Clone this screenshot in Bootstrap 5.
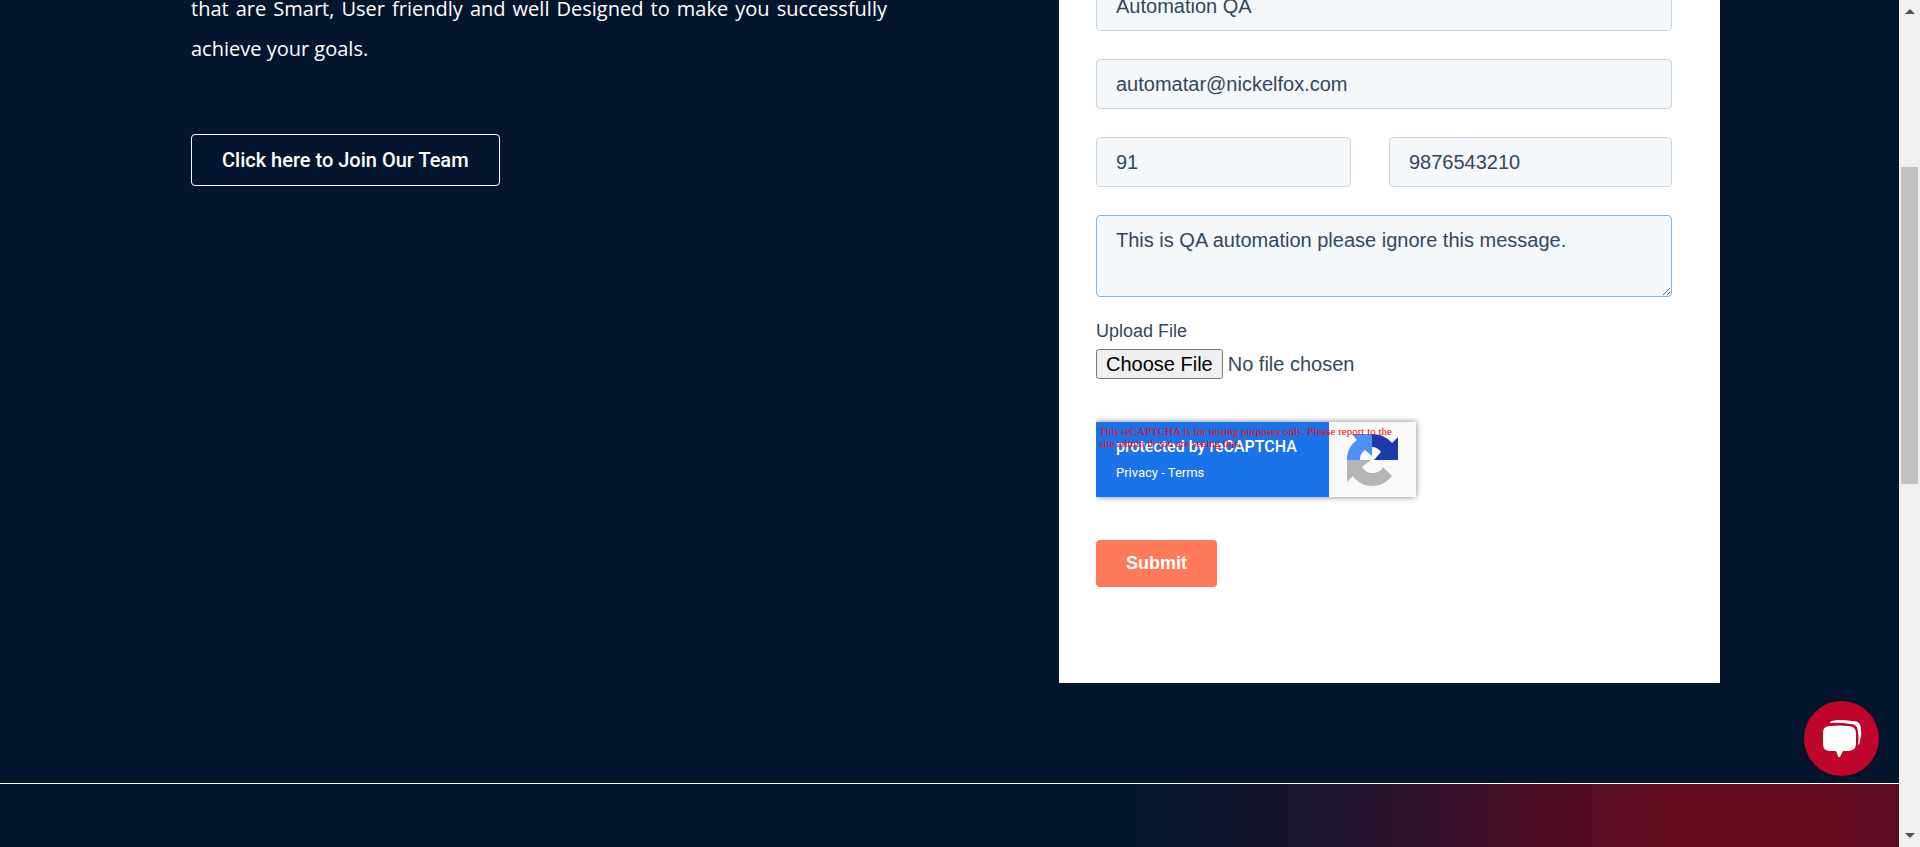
<!DOCTYPE html>
<html lang="en">
<head>
<meta charset="utf-8">
<meta name="viewport" content="width=device-width, initial-scale=1">
<title>Contact us</title>
<link href="https://cdn.jsdelivr.net/npm/bootstrap@5.3.0/dist/css/bootstrap.min.css" rel="stylesheet">
<style>
  body { background: #04162e; font-family: "Liberation Sans", Arial, sans-serif; }
  .page-area { min-width: 0; }
  .contact-grid { grid-template-columns: 191fr 696fr 172fr 661fr 179fr; padding-bottom: 100px; }
  .intro-col { grid-column: 2; margin-top: -11px; }
  .form-col { grid-column: 4; margin-top: -19px; padding: 0 48px 96px 37px; }
  .intro-text { font: 20px/40px "Open Sans", sans-serif; text-align: justify; margin-bottom: 65px; }
  .join-btn { font: 500 20px/24px Roboto, sans-serif; padding: 13px 30px; border-radius: 4px; }
  .hs-field { background: #f5f8fa; border: 1px solid #cbd6e2; border-radius: 4px; color: #33475b;
    font-size: 20px; line-height: 24px; padding: 12px 19px; height: 50px; }
  .hs-field:focus, .hs-area { background: #f5f8fa; border-color: #75b9ee; color: #33475b; box-shadow: none; }
  .hs-area { height: 82px; resize: vertical; display: block; }
  .form-stack { gap: 28px; }
  .phone-grid { grid-template-columns: 255fr 283fr; gap: 38px; }
  .upload-label { font-size: 18px; line-height: 24px; margin: -6px 0 6px; color: #33475b; }
  .upload-input { font-size: 20px; line-height: 24px; color: #33475b; height: 30px; }
  .upload-input::file-selector-button { padding: 1px 8px; margin-right: 5px; }
  .captcha-clip { overflow: hidden; margin: 5px 0 0; padding: 10px 10px 10px 0; width: 330px; }
  .captcha { height: 75px; background: #f9f9f9; box-shadow: 0 0 6px gray; font-family: Roboto, sans-serif; }
  .captcha-info { width: 233px; background: #1a73e8; padding: 15px 0 0 20px; font-size: 13px; line-height: 20px; }
  .captcha-title { font-size: 16px; font-weight: 500; line-height: 20px; margin-bottom: 6px; white-space: nowrap; }
  .captcha-warning { top: 3px; left: 3px; right: 8px; color: red; font: 11px/12px "Liberation Serif", serif; }
  .submit-btn { background: #ff7a59; color: #fff; font-size: 18px; font-weight: 700; line-height: 23px; padding: 12px 30px; border-radius: 4px; margin-top: 5px; }
  .next-band { min-height: 64px; border-top: 1px solid #fff;
    background: linear-gradient(90deg, #04162e 60%, #0d162e 64%, #19142a 69%, #33122a 76%, #4c0e25 81%, #610b21 87%, #660c22 92%, #660c22 96%, #5a0b21 100%); }
  .scroll-track { width: 21px; background: #f0f0f0; }
  .scroll-thumb { width: 17px; height: 317px; background: #c1c1c1; margin-top: 149px; }
  .chat-btn { right: 41px; bottom: 71px; width: 75px; height: 75px; background: #bf0529; box-shadow: 0 2px 12px rgba(0,0,0,.3); }
</style>
</head>
<body>
<div class="d-flex vh-100 overflow-hidden">
  <div class="page-area flex-grow-1 d-flex flex-column overflow-hidden">
    <main class="contact-grid d-grid">
      <section class="intro-col text-white">
        <p class="intro-text">that are Smart, User friendly and well Designed to make you successfully achieve your goals.</p>
        <a href="#join" class="btn btn-outline-light join-btn text-white border-white">Click here to Join Our Team</a>
      </section>
      <form class="form-col bg-white">
        <div class="form-stack d-flex flex-column align-items-stretch">
          <input class="form-control hs-field" type="text" aria-label="Name" value="Automation QA">
          <input class="form-control hs-field" type="email" aria-label="Email" value="automatar@nickelfox.com">
          <div class="phone-grid d-grid">
            <input class="form-control hs-field" type="text" aria-label="Country code" value="91">
            <input class="form-control hs-field" type="tel" aria-label="Phone number" value="9876543210">
          </div>
          <textarea class="form-control hs-field hs-area" aria-label="Message">This is QA automation please ignore this message.</textarea>
          <div>
            <label class="upload-label d-block" for="upload">Upload File</label>
            <input class="upload-input d-block w-100" type="file" id="upload">
          </div>
          <div class="captcha-clip">
            <div class="captcha d-flex position-relative">
              <div class="captcha-info text-white">
                <div class="captcha-title">protected by reCAPTCHA</div>
                <a class="text-white text-decoration-none" href="#privacy">Privacy</a> - <a class="text-white text-decoration-none" href="#terms">Terms</a>
              </div>
              <svg class="m-auto" width="54" height="54" viewBox="0 0 54 54" aria-hidden="true">
                <path fill="#1c3aa9" d="M26 1C35 1 42 5 46 10L52 4V27H28L35 19C33 16 30 14 26 14Z"/>
                <path fill="#4a90f5" d="M26 1V23L19 17C16 19 14 22 14 27H1C1 18 5 11 11 7L6 1Z"/>
                <path fill="#b5b5b5" d="M1 27H25L16 34C19 38 22 40 26 40C31 40 35 38 37 34L46 43C41 49 35 53 26 53C18 53 11 49 7 43L1 49Z"/>
              </svg>
              <div class="captcha-warning position-absolute">This reCAPTCHA is for testing purposes only. Please report to the site admin if you are seeing this.</div>
            </div>
          </div>
          <button class="btn submit-btn border-0 align-self-start" type="submit">Submit</button>
        </div>
      </form>
    </main>
    <section class="next-band flex-grow-1"></section>
  </div>
  <div class="scroll-track flex-shrink-0 d-flex flex-column align-items-center" aria-hidden="true">
    <svg width="10" height="18" viewBox="0 0 10 18"><path fill="#505050" d="M0 14L5 9L10 14Z"/></svg>
    <div class="scroll-thumb"></div>
    <svg class="mt-auto" width="10" height="18" viewBox="0 0 10 18"><path fill="#505050" d="M0 4L5 9L10 4Z"/></svg>
  </div>
</div>
<button class="chat-btn position-fixed rounded-circle border-0 p-0" type="button" aria-label="Open chat">
  <svg class="d-block" width="75" height="75" viewBox="0 0 75 75" aria-hidden="true">
    <path fill="#fff" d="M19 33C19 27 21 25 27 25Q35 24 43 25C49 25 52 27 52 33V42C52 48 49 50 43 50H39L36 56Q35 57 34 55L32 50H27C21 50 19 48 19 42Z"/>
    <path fill="#fff" d="M26 22C26 20 28 20 34 19Q42 19 48 20C55 20 57 23 57 29Q58 34 56 40Q56 43 54 44C54 40 55 37 54 32C54 25 51 23 46 23Q36 21 26 22Z"/>
  </svg>
</button>
<script src="https://cdn.jsdelivr.net/npm/bootstrap@5.3.0/dist/js/bootstrap.bundle.min.js"></script>
</body>
</html>
